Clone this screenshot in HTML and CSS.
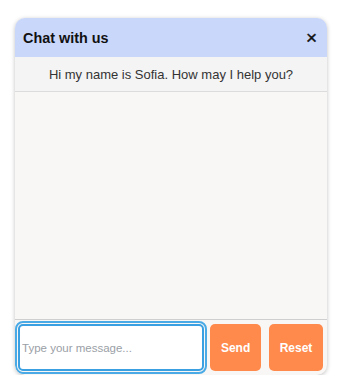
FILE: index.html
```html
<!DOCTYPE html>
<html>
<head>
<meta charset="utf-8">
<link rel="stylesheet" href="styles.css">
</head>
<body>
<div class="chat">
  <div class="chat-header">
    <span class="chat-title">Chat with us</span>
    <span class="chat-close">&times;</span>
  </div>
  <div class="chat-greeting">Hi my name is Sofia. How may I help you?</div>
  <div class="chat-messages"></div>
  <form class="chat-form">
    <input class="chat-input" type="text" placeholder="Type your message..." autofocus>
    <button class="chat-btn chat-send" type="button">Send</button>
    <button class="chat-btn chat-reset" type="button">Reset</button>
  </form>
</div>
</body>
</html>
```

FILE: styles.css
```css
html, body {
  margin: 0;
  padding: 0;
  background: #ffffff;
}
body {
  font-family: "Liberation Sans", Arial, sans-serif;
}
.chat {
  margin: 18px 0 0 15px;
  width: 312px;
  height: 357px;
  box-sizing: border-box;
  border-radius: 10px;
  background: #f8f7f5;
  box-shadow: 0 1px 4px rgba(0, 0, 0, 0.25);
  display: flex;
  flex-direction: column;
  overflow: hidden;
}
.chat-header {
  height: 39px;
  flex: none;
  background: #c9d7fb;
  display: flex;
  align-items: center;
  justify-content: space-between;
  padding: 0 10px 0 8px;
}
.chat-title {
  font-size: 14.4px;
  font-weight: bold;
  color: #111;
}
.chat-close {
  font-size: 19px;
  font-weight: normal;
  color: #111;
  line-height: 1;
  -webkit-text-stroke: 0.4px #111;
}
.chat-greeting {
  height: 35px;
  flex: none;
  box-sizing: border-box;
  background: #f4f4f4;
  border-bottom: 1px solid #dcdcdc;
  font-size: 13px;
  color: #333;
  display: flex;
  align-items: center;
  justify-content: center;
}
.chat-messages {
  flex: 1;
  background: #f8f7f5;
}
.chat-form {
  flex: none;
  height: 56px;
  box-sizing: border-box;
  border-top: 1px solid #cfcfcf;
  display: flex;
  align-items: stretch;
  padding: 4px 4px 4px 3px;
  margin: 0;
}
.chat-input {
  flex: 1;
  min-width: 0;
  margin: 0 6px 0 0;
  box-sizing: border-box;
  border: 2px solid #3aa0e2;
  border-radius: 5px;
  outline: 2px solid #4aaae6;
  outline-offset: 1px;
  background: #fff;
  padding: 0 2px;
  font-family: "Liberation Sans", Arial, sans-serif;
  font-size: 11.5px;
  color: #333;
}
.chat-input::placeholder {
  color: #9aa0a6;
}
.chat-btn {
  border: none;
  border-radius: 5px;
  background: #ff8a4c;
  color: #fff;
  font-family: "Liberation Sans", Arial, sans-serif;
  font-size: 12px;
  font-weight: bold;
  padding: 0 10.7px;
}
.chat-reset {
  margin-left: 8px;
}
```
